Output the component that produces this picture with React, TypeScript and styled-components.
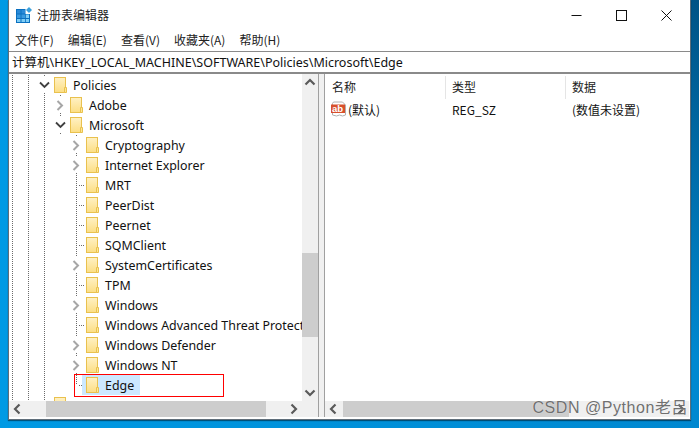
import React from 'react'
import styled, { createGlobalStyle } from 'styled-components'

const uiFont = `"Noto Sans", "Noto Sans CJK SC", sans-serif`
const cjkFont = `"Noto Sans CJK SC", "Liberation Sans", sans-serif`

const GlobalStyle = createGlobalStyle`
  html, body {
    margin: 0;
    padding: 0;
    height: 428px;
    overflow: hidden;
  }
  body {
    font-family: ${cjkFont};
  }
`

const Stage = styled.div`
  position: relative;
  width: 699px;
  height: 428px;
`

const Desktop = styled.div`
  width: 699px;
  height: 428px;
  padding: 0 8px 8px;
  box-sizing: border-box;
  background:
    linear-gradient(to bottom left, rgba(0, 30, 60, 0.5) 0, transparent 42%),
    linear-gradient(90deg, #009ae4, #0088d0);
`

const Win = styled.div`
  height: 100%;
  display: flex;
  flex-direction: column;
  background: #fff;
  border: 1px solid #5f6e7a;
  border-top: 0;
  box-sizing: border-box;
  box-shadow: 0 1px 1px rgba(0, 0, 0, 0.45);
`

const TitleBar = styled.div`
  height: 30px;
  flex: none;
  display: flex;
  align-items: center;
  padding-left: 7px;
  padding-right: 1px;
  box-sizing: border-box;
`

const Title = styled.span`
  margin: 0 0 2px 5px;
  font-size: 12px;
  color: #222;
  flex: 1;
`

const Caption = styled.div`
  width: 45px;
  height: 30px;
  display: flex;
  align-items: center;
  justify-content: center;
`

const MenuBar = styled.div`
  height: 20px;
  flex: none;
  display: flex;
  gap: 14px;
  padding: 0 0 2px 6px;
  box-sizing: border-box;
  align-items: center;
  font-size: 12px;
  color: #222;
`

const AddressBar = styled.div`
  height: 23px;
  flex: none;
  margin-top: 1px;
  box-sizing: border-box;
  border-top: 1px solid #8a8a8a;
  border-bottom: 2px solid #8a8a8a;
  display: flex;
  align-items: center;
  padding: 0 0 1px 3px;
  font-size: 12.5px;
  color: #111;
  font-family: ${uiFont};
  white-space: nowrap;
`

const Panes = styled.div`
  flex: 1;
  min-height: 0;
  display: flex;
  margin: 0 1px 2px 0;
`

const TreePane = styled.div`
  width: 310px;
  flex: none;
  box-sizing: border-box;
  display: grid;
  grid-template-columns: 1fr 16px;
  grid-template-rows: 1fr 16px;
  min-height: 0;
  border-right: 1px solid #a0a0a0;
`

const Splitter = styled.div`
  width: 5px;
  flex: none;
  background: #f0f0f0;
  border-right: 1px solid #a0a0a0;
`

const ListPane = styled.div`
  flex: 1;
  min-width: 0;
  display: flex;
  flex-direction: column;
`

const TreeBody = styled.div`
  overflow: hidden;
  padding-top: 1px;
  min-height: 0;
`

// the tree is scrolled a little sideways, so the first guide column starts left of the pane
const Row = styled.div`
  height: 20px;
  display: flex;
  align-items: stretch;
  margin-left: -5px;
`

const dots = `linear-gradient(#6a6a6a 50%, transparent 50%)`
const hdots = `repeating-linear-gradient(90deg, #6a6a6a 0 1px, transparent 1px 2px)`

const Cell = styled.div<{ $kind?: 'line' | 'tee' | 'elbow' }>`
  width: 16px;
  flex: none;
  display: flex;
  align-items: center;
  justify-content: center;
  ${({ $kind }) => $kind === 'line' && `
    background: ${dots} 8px 0 / 1px 2px repeat-y;
  `}
  ${({ $kind }) => $kind === 'tee' && `
    background: ${dots} 8px 0 / 1px 2px repeat-y, ${hdots} 11px 10px / 5px 1px no-repeat;
  `}
  ${({ $kind }) => $kind === 'elbow' && `
    background: ${dots} 8px 0 / 1px 2px no-repeat, ${dots} 8px 2px / 1px 2px no-repeat,
      ${dots} 8px 4px / 1px 2px no-repeat, ${dots} 8px 6px / 1px 2px no-repeat,
      ${dots} 8px 8px / 1px 2px no-repeat, ${hdots} 11px 10px / 5px 1px no-repeat;
  `}
`

const Toggle = styled.span`
  width: 16px;
  height: 16px;
  display: flex;
  align-items: center;
  justify-content: center;
  background: #fff;
`

const Item = styled.div<{ $selected?: boolean }>`
  display: flex;
  align-items: center;
  margin-left: ${({ $selected }) => ($selected ? '-2px' : '0')};
  padding-left: ${({ $selected }) => ($selected ? '4px' : '2px')};
  background: ${({ $selected }) => ($selected ? '#cce8ff' : 'transparent')};
`

const Label = styled.span<{ $selected?: boolean }>`
  margin-left: 6px;
  padding-right: ${({ $selected }) => ($selected ? '6px' : '7px')};
  font-size: 12.4px;
  font-family: ${uiFont};
  color: #111;
  white-space: nowrap;
`

const ScrollV = styled.div`
  background: #f0f0f0;
  display: flex;
  flex-direction: column;
`

const ScrollH = styled.div`
  background: #f0f0f0;
  height: 16px;
  display: flex;
  align-items: stretch;
`

const ScrollBtn = styled.div`
  flex: none;
  width: 16px;
  height: 16px;
  display: flex;
  align-items: center;
  justify-content: center;
`

const VTrack = styled.div`
  flex: 1;
  display: flex;
  flex-direction: column;
  padding: 163px 0 48px;
`

const Thumb = styled.div`
  flex: 1;
  background: #cdcdcd;
`

const HTrack = styled.div<{ $left: number; $right: number }>`
  flex: 1;
  display: flex;
  padding-left: ${({ $left }) => $left}px;
  padding-right: ${({ $right }) => $right}px;
`

const Corner = styled.div`
  background: #f0f0f0;
`

const ListHead = styled.div`
  height: 25px;
  flex: none;
  display: flex;
  font-size: 12px;
  color: #222;
  padding: 2px 0 0 1px;
  box-sizing: border-box;
`

const HeadCell = styled.div<{ $last?: boolean }>`
  width: 120px;
  box-sizing: border-box;
  padding: 2px 0 0 6px;
  border-right: ${({ $last }) => ($last ? '0' : '1px solid #e5e5e5')};
`

const ListRow = styled.div`
  height: 20px;
  flex: none;
  display: flex;
  align-items: center;
  font-size: 12px;
  color: #111;
  padding-left: 1px;
`

const ListCell = styled.div`
  width: 120px;
  box-sizing: border-box;
  padding-left: 6px;
  display: flex;
  align-items: center;
  gap: 1px;
`

const IconSlot = styled.span`
  display: flex;
  margin-left: -1px;
`

const Spacer = styled.div`
  flex: 1;
`

const RedBox = styled.div`
  position: absolute;
  left: 74px;
  top: 374px;
  width: 150px;
  height: 23px;
  border: 1px solid #f00;
  box-sizing: border-box;
`

const Watermark = styled.div`
  position: absolute;
  right: 11px;
  top: 398px;
  font-size: 16px;
  line-height: 20px;
  color: #707070;
  text-shadow: 0 0 1px rgba(255, 255, 255, 0.9);
  font-family: "Liberation Sans", "Noto Sans CJK SC", sans-serif;
  white-space: nowrap;
  letter-spacing: 0.55px;
`

const AppIcon = () => (
  <svg width="16" height="16" viewBox="0 0 16 16">
    <rect x="0" y="2" width="14" height="14" fill="#0a70c0" />
    <path d="M1 3h3.5v3.5H1zM5.5 3H9v3.5H5.5z" fill="#2a8ad8" />
    <path d="M1 7.5h3.5V11H1zM5.5 7.5H9V11H5.5z" fill="#3a9ae0" />
    <path d="M9.8 7.5H13V11H9.8zM1 12h3.5v3H1zM5.5 12H9v3H5.5zM9.8 12H13v3H9.8z" fill="#7fcdf5" />
    <path d="M9.5 2h4.5v5H9.5z" fill="#fff" />
    <path d="M13 0l3 3-3 3-3-3z" fill="#3aa0dc" />
  </svg>
)

const FolderIcon = () => (
  <svg width="13" height="16" viewBox="0 0 13 16">
    <defs>
      <linearGradient id="fold" x1="0" y1="0" x2="0" y2="1">
        <stop offset="0" stopColor="#fff1c4" />
        <stop offset="1" stopColor="#fcde84" />
      </linearGradient>
    </defs>
    <rect x="0.5" y="0.5" width="11" height="15" fill="url(#fold)" stroke="#e9c14e" />
    <path d="M10.5 15.5v-5h2v5z" fill="#fde796" stroke="#e9c14e" />
  </svg>
)

const ChevronRight = () => (
  <svg width="8" height="11" viewBox="0 0 8 11">
    <path d="M1.5 1l4.5 4.5-4.5 4.5" fill="none" stroke="#a6a6a6" strokeWidth="2" />
  </svg>
)

const ChevronDown = () => (
  <svg width="11" height="8" viewBox="0 0 11 8">
    <path d="M1 1.5l4.5 4.5 4.5-4.5" fill="none" stroke="#404040" strokeWidth="1.8" />
  </svg>
)

const Arrow = ({ d }: { d: string }) => (
  <svg width="16" height="16" viewBox="0 0 16 16">
    <path d={d} fill="none" stroke="#5a5a5a" strokeWidth="2.2" />
  </svg>
)

const AbIcon = () => (
  <svg width="16" height="16" viewBox="0 0 16 16">
    <path d="M1.5 2.5l1-1.5h9l3 3v10l-3 1-3-1-3 1-4-1z" fill="#fff" stroke="#b0b0b0" />
    <rect x="0" y="3.5" width="14" height="8.5" fill="#d8502c" />
    <text x="1" y="10.8" fontSize="9.5" fontWeight="700" fontFamily="Liberation Sans" fill="#fff">ab</text>
  </svg>
)

type Node = { name: string; depth: number; kind: 'open' | 'closed' | 'leaf' | 'last' | 'none' }

const nodes: Node[] = [
  { name: 'Policies', depth: 0, kind: 'open' },
  { name: 'Adobe', depth: 1, kind: 'closed' },
  { name: 'Microsoft', depth: 1, kind: 'open' },
  { name: 'Cryptography', depth: 2, kind: 'closed' },
  { name: 'Internet Explorer', depth: 2, kind: 'closed' },
  { name: 'MRT', depth: 2, kind: 'leaf' },
  { name: 'PeerDist', depth: 2, kind: 'leaf' },
  { name: 'Peernet', depth: 2, kind: 'leaf' },
  { name: 'SQMClient', depth: 2, kind: 'leaf' },
  { name: 'SystemCertificates', depth: 2, kind: 'closed' },
  { name: 'TPM', depth: 2, kind: 'leaf' },
  { name: 'Windows', depth: 2, kind: 'closed' },
  { name: 'Windows Advanced Threat Protection', depth: 2, kind: 'leaf' },
  { name: 'Windows Defender', depth: 2, kind: 'closed' },
  { name: 'Windows NT', depth: 2, kind: 'closed' },
  { name: 'Edge', depth: 2, kind: 'last' },
  { name: '', depth: 0, kind: 'none' },
]

function TreeRow({ node }: { node: Node }) {
  const { name, depth, kind } = node
  const selected = name === 'Edge'
  return (
    <Row>
      <Cell $kind="line" />
      <Cell $kind="line" />
      {depth > 0 && <Cell $kind="line" />}
      {depth === 2 && <Cell />}
      {kind === 'open' && <Cell $kind="line"><Toggle><ChevronDown /></Toggle></Cell>}
      {kind === 'closed' && <Cell $kind="line"><Toggle><ChevronRight /></Toggle></Cell>}
      {kind === 'leaf' && <Cell $kind="tee" />}
      {kind === 'last' && <Cell $kind="elbow" />}
      {kind === 'none' && <Cell $kind="line" />}
      <Item $selected={selected}>
        <FolderIcon />
        {name && <Label $selected={selected}>{name}</Label>}
      </Item>
    </Row>
  )
}

export default function App() {
  return (
    <Stage>
      <GlobalStyle />
      <Desktop>
        <Win>
          <TitleBar>
            <AppIcon />
            <Title>注册表编辑器</Title>
            <Caption>
              <svg width="11" height="11" viewBox="0 0 11 11"><path d="M0.5 5.5h10" stroke="#111" /></svg>
            </Caption>
            <Caption>
              <svg width="11" height="11" viewBox="0 0 11 11"><rect x="0.5" y="0.5" width="10" height="10" fill="none" stroke="#111" /></svg>
            </Caption>
            <Caption>
              <svg width="11" height="11" viewBox="0 0 11 11"><path d="M0.5 0.5l10 10M10.5 0.5l-10 10" stroke="#111" /></svg>
            </Caption>
          </TitleBar>
          <MenuBar>
            <span>文件(F)</span>
            <span>编辑(E)</span>
            <span>查看(V)</span>
            <span>收藏夹(A)</span>
            <span>帮助(H)</span>
          </MenuBar>
          <AddressBar>计算机\HKEY_LOCAL_MACHINE\SOFTWARE\Policies\Microsoft\Edge</AddressBar>
          <Panes>
            <TreePane>
              <TreeBody>
                {nodes.map((n, i) => <TreeRow key={i} node={n} />)}
              </TreeBody>
              <ScrollV>
                <ScrollBtn><Arrow d="M3.5 10.5l4.5-4.5 4.5 4.5" /></ScrollBtn>
                <VTrack><Thumb /></VTrack>
                <ScrollBtn><Arrow d="M3.5 5.5l4.5 4.5 4.5-4.5" /></ScrollBtn>
              </ScrollV>
              <ScrollH>
                <ScrollBtn><Arrow d="M10.5 3.5l-4.5 4.5 4.5 4.5" /></ScrollBtn>
                <HTrack $left={21} $right={20}><Thumb /></HTrack>
                <ScrollBtn><Arrow d="M5.5 3.5l4.5 4.5-4.5 4.5" /></ScrollBtn>
              </ScrollH>
              <Corner />
            </TreePane>
            <Splitter />
            <ListPane>
              <ListHead>
                <HeadCell>名称</HeadCell>
                <HeadCell>类型</HeadCell>
                <HeadCell $last>数据</HeadCell>
              </ListHead>
              <ListRow>
                <ListCell><IconSlot><AbIcon /></IconSlot>(默认)</ListCell>
                <ListCell>REG_SZ</ListCell>
                <ListCell>(数值未设置)</ListCell>
              </ListRow>
              <Spacer />
              <ScrollH>
                <ScrollBtn><Arrow d="M10.5 3.5l-4.5 4.5 4.5 4.5" /></ScrollBtn>
                <HTrack $left={2} $right={104}><Thumb /></HTrack>
                <ScrollBtn><Arrow d="M5.5 3.5l4.5 4.5-4.5 4.5" /></ScrollBtn>
              </ScrollH>
            </ListPane>
          </Panes>
        </Win>
      </Desktop>
      <RedBox />
      <Watermark>CSDN @Python老吕</Watermark>
    </Stage>
  )
}
